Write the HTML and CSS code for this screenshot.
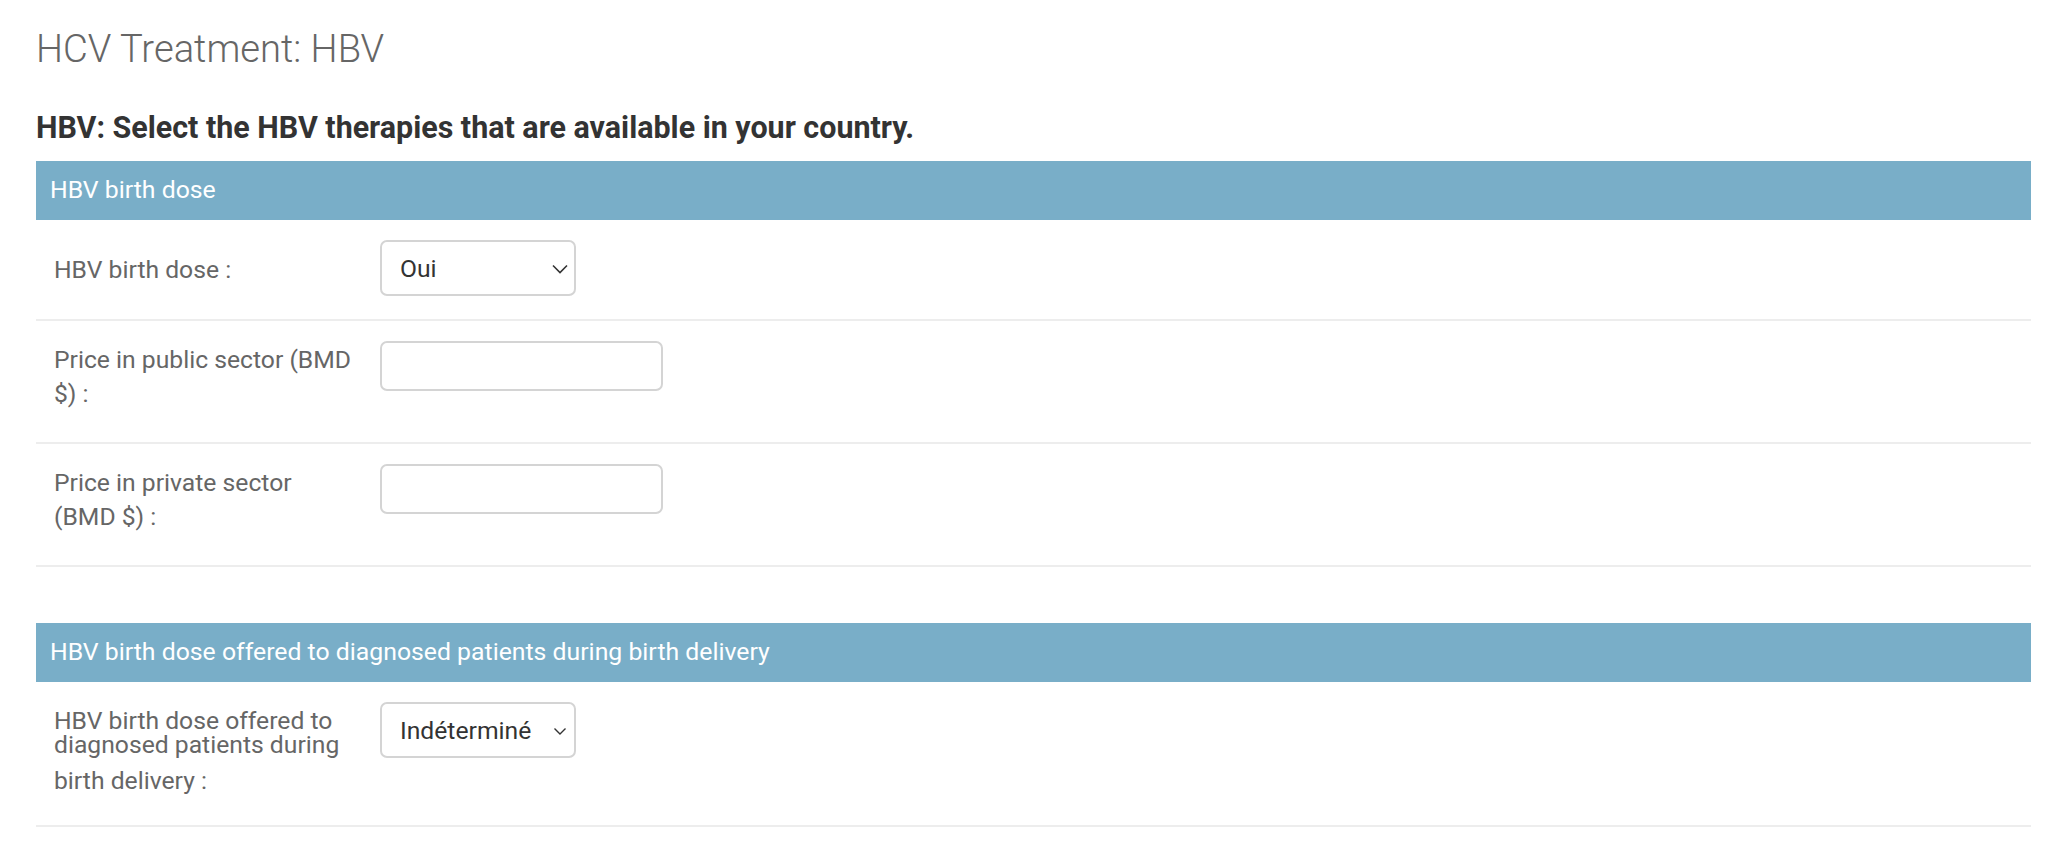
FILE: index.html
```html
<!DOCTYPE html>
<html lang="en">
<head>
<meta charset="utf-8">
<title>HCV Treatment: HBV</title>
<link rel="stylesheet" href="styles.css">
</head>
<body>
<div class="page">
  <h1 class="title">HCV Treatment: HBV</h1>
  <h2 class="lead">HBV: Select the HBV therapies that are available in your country.</h2>

  <fieldset class="module">
    <h2 class="module-head">HBV birth dose</h2>
    <div class="row">
      <div class="label label--single"><span class="line">HBV birth dose :</span></div>
      <div class="select">
        <span class="select-value">Oui</span>
        <svg class="chevron" width="16" height="10" viewBox="0 0 16 10"><polyline points="1,1.5 8,8.5 15,1.5" fill="none" stroke="#333" stroke-width="1.6"/></svg>
      </div>
    </div>
    <div class="row">
      <div class="label"><span class="line">Price in public sector (BMD</span><span class="line">$) :</span></div>
      <div class="input"></div>
    </div>
    <div class="row">
      <div class="label"><span class="line">Price in private sector</span><span class="line">(BMD $) :</span></div>
      <div class="input"></div>
    </div>
  </fieldset>

  <fieldset class="module">
    <h2 class="module-head">HBV birth dose offered to diagnosed patients during birth delivery</h2>
    <div class="row">
      <div class="label label--tight">
        <span class="line line--tight">HBV birth dose offered to</span>
        <span class="line line--tight">diagnosed patients during</span>
        <span class="line line--last">birth delivery :</span>
      </div>
      <div class="select">
        <span class="select-value">Indéterminé</span>
        <svg class="chevron chevron--small" width="16" height="10" viewBox="0 0 16 10"><polyline points="2.5,2.5 8,8 13.5,2.5" fill="none" stroke="#333" stroke-width="1.4"/></svg>
      </div>
    </div>
  </fieldset>
</div>
</body>
</html>
```
FILE: styles.css
```css
html, body {
  margin: 0;
  padding: 0;
  background: #fff;
}

body {
  font-family: Roboto, "Liberation Sans", Arial, sans-serif;
  color: #333;
}

.page {
  padding: 27px 17px 0 36px;
}

.title {
  margin: 0;
  font-weight: 300;
  font-size: 38.2px;
  line-height: 44px;
  color: #666;
}

.lead {
  margin: 39px 0 15px;
  font-weight: 700;
  font-size: 30.45px;
  line-height: 36px;
  color: #333;
}

.module {
  margin: 0 0 56px;
  padding: 0;
  border: none;
  min-width: 0;
}

.module-head {
  margin: 0;
  background: #79aec8;
  color: #fff;
  font-weight: 400;
  font-size: 24.8px;
  line-height: 28px;
  padding: 15px 14px 16px;
}

.row {
  display: flex;
  align-items: flex-start;
  padding: 20px 18px 23px;
  border-bottom: 2px solid #ededed;
}

.label {
  flex: 0 0 326px;
  color: #666;
  font-size: 24.7px;
  line-height: 34px;
  padding-top: 2px;
  padding-bottom: 8px;
}

.label--single {
  padding-top: 13px;
  padding-bottom: 6px;
}

.label--tight {
  padding-top: 7px;
  padding-bottom: 3px;
}

.line {
  display: block;
  white-space: nowrap;
}

.line--tight {
  line-height: 24px;
}

.line--last {
  line-height: 36px;
  margin-top: 6px;
}

.select {
  box-sizing: border-box;
  width: 196px;
  height: 56px;
  border: 2px solid #d4d4d4;
  border-radius: 7px;
  display: flex;
  align-items: center;
  justify-content: space-between;
  padding: 0 6px 0 18px;
  font-size: 24.7px;
  color: #333;
  background: #fff;
}

.select-value {
  white-space: nowrap;
}

.chevron {
  flex: 0 0 auto;
  margin-top: 1px;
}

.chevron--small {
  margin-left: 4px;
}

.input {
  box-sizing: border-box;
  width: 283px;
  height: 50px;
  border: 2px solid #d4d4d4;
  border-radius: 7px;
  background: #fff;
}
```
